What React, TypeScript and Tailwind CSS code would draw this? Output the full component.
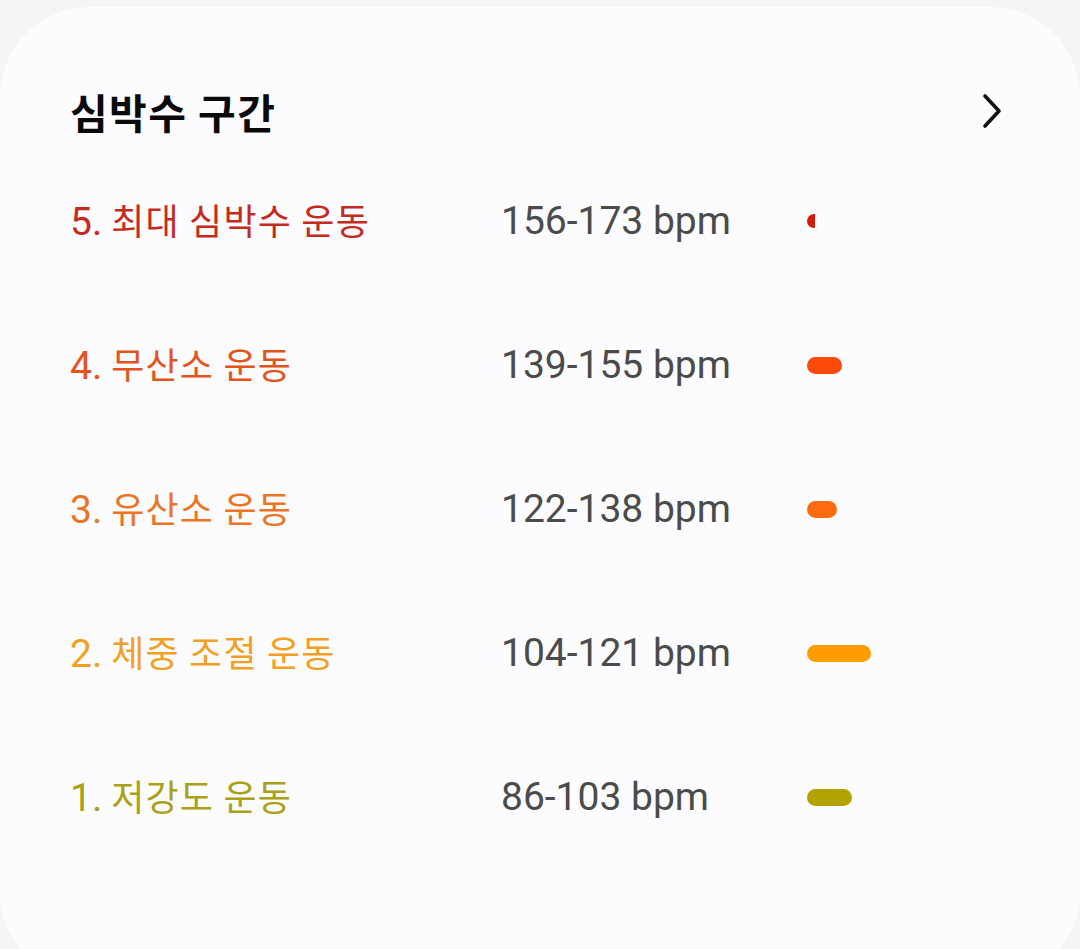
import React from "react";

const zones = [
  { n: "5.", label: "최대 심박수 운동", range: "156-173 bpm", text: "text-[#c62a1e]", bar: "w-[8px] h-[14px] rounded-l-full rounded-r-[3px] bg-[#d41c0c]" },
  { n: "4.", label: "무산소 운동", range: "139-155 bpm", text: "text-[#e3531c]", bar: "w-[35px] h-[17px] rounded-full bg-[#fb4a0a]" },
  { n: "3.", label: "유산소 운동", range: "122-138 bpm", text: "text-[#ec7424]", bar: "w-[30px] h-[17px] rounded-full bg-[#ff6b10]" },
  { n: "2.", label: "체중 조절 운동", range: "104-121 bpm", text: "text-[#f2a024]", bar: "w-[64px] h-[17px] rounded-full bg-[#ff9c00]" },
  { n: "1.", label: "저강도 운동", range: "86-103 bpm", text: "text-[#a9a118]", bar: "w-[45px] h-[17px] rounded-full bg-[#b3a300]" },
];

export default function App() {
  return (
    <div className="h-[949px] w-[1080px] overflow-hidden bg-[#f5f5f7] pt-[7px] font-['Roboto','Noto_Sans_CJK_KR',sans-serif]">
      <div className="h-[975px] rounded-[90px] bg-[#fcfcfe] pl-[70px] pr-[78px] pt-[80px]">
        <div className="flex h-[48px] items-center justify-between">
          <h1 className="font-['Noto_Sans_CJK_KR',sans-serif] text-[41px] font-bold leading-[48px] tracking-[1.4px] text-[#0a0a0a]">
            심박수 구간
          </h1>
          <svg width="24" height="36" viewBox="0 0 24 36" className="mr-[-2px]">
            <path d="M5 3 L19 18 L5 33" fill="none" stroke="#111" strokeWidth="3.6" strokeLinecap="round" strokeLinejoin="round" />
          </svg>
        </div>
        <div className="mt-[14px] flex flex-col">
          {zones.map((z) => (
            <div key={z.n} className="flex h-[144px] items-center">
              <div className={`flex w-[431px] items-baseline leading-none ${z.text}`}>
                <span className="font-['Roboto',sans-serif] text-[39px]">{z.n}</span>
                <span className="ml-[9px] font-['Noto_Sans_CJK_KR',sans-serif] text-[36px] tracking-[1.2px]">
                  {z.label}
                </span>
              </div>
              <div className="w-[306px] font-['Roboto',sans-serif] text-[39px] leading-none text-[#4b4b4b]">
                {z.range}
              </div>
              <div className={z.bar} />
            </div>
          ))}
        </div>
      </div>
    </div>
  );
}
